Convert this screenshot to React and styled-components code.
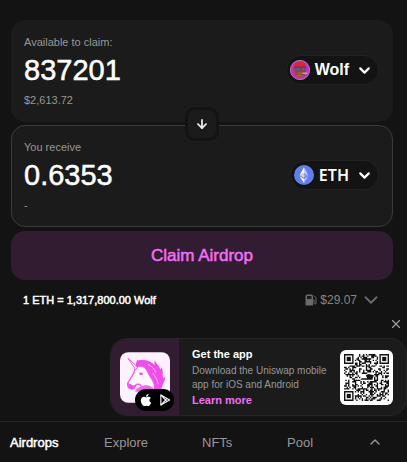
import React from 'react'
import styled, { createGlobalStyle, css } from 'styled-components'
import { FaApple } from 'react-icons/fa'
import { FiArrowDown, FiChevronDown, FiChevronUp, FiX } from 'react-icons/fi'

const GlobalStyle = createGlobalStyle`
    :root {
        --page: #131313;
        --card: #1b1b1b;
        --line: #252525;
        --plum: #311c31;
        --pink: #f36ef4;
        --white: #ffffff;
        --gray: #979797;
    }

    * {
        box-sizing: border-box;
    }

    body {
        margin: 0;
        background: var(--page);
        color: var(--white);
        font-family: 'Liberation Sans', Arial, sans-serif;
    }

    button {
        padding: 0;
        border: none;
        background: none;
        color: inherit;
        font-family: inherit;
        cursor: pointer;
    }

    a {
        text-decoration: none;
    }

    svg {
        display: block;
        flex-shrink: 0;
    }
`

// Liberation Sans has no medium weight, a thin stroke stands in for it
const medium = css`
    -webkit-text-stroke: 0.5px currentColor;
`

const Page = styled.div`
    min-height: 100vh;
    display: flex;
    flex-direction: column;
`

const Swap = styled.main`
    display: flex;
    flex-direction: column;
    padding: 20px 14px 0 11px;
`

const Cards = styled.div`
    position: relative;
    display: flex;
    flex-direction: column;
    gap: 3px;
`

const Card = styled.section`
    padding: 14px 13px 14px 12px;
    border: 1px solid ${({ $outlined }) => ($outlined ? '#393b3d' : 'var(--card)')};
    border-radius: 14px;
    background: var(--card);
`

const Small = styled.div`
    font-size: 11px;
    line-height: 14px;
    color: var(--gray);
`

const AmountRow = styled.div`
    display: flex;
    align-items: center;
    justify-content: space-between;
    height: 34px;
    margin: 4px 0 6px;
`

const Amount = styled.div`
    font-size: 29px;
    line-height: 34px;
    ${medium}
`

const TokenButton = styled.button`
    display: flex;
    align-items: center;
    height: 30px;
    padding: 0 5px 0 3px;
    border: 1px solid #222222;
    border-radius: 15px;
    background: #131313;
    font-family: ${({ $font }) => $font};
    font-size: 16px;
    font-weight: ${({ $weight }) => $weight};

    span {
        margin: 0 7px 0 5px;
    }
`

const SwitchButton = styled.button`
    position: absolute;
    top: 50%;
    left: 50%;
    transform: translate(-50%, -50%);
    width: 34px;
    height: 34px;
    display: flex;
    align-items: center;
    justify-content: center;
    border: 3px solid #131313;
    border-radius: 10px;
    background: var(--card);
    color: #eeeeee;
`

const ClaimButton = styled.button`
    height: 49px;
    margin-top: 4px;
    border-radius: 14px;
    background: var(--plum);
    color: var(--pink);
    font-size: 17px;
    ${medium}
`

const RateRow = styled.div`
    display: flex;
    align-items: center;
    justify-content: space-between;
    padding: 13px 11px 0 12px;
    line-height: 14px;
`

const Rate = styled.div`
    font-size: 11px;
    ${medium}
`

const GasButton = styled.button`
    display: flex;
    align-items: center;
    gap: 3px;
    height: 14px;
    color: #858585;
    font-size: 12px;
    line-height: 14px;

    svg {
        color: #6b6b6b;
    }
`

const Promo = styled.aside`
    display: flex;
    flex-direction: column;
    align-items: flex-end;
    gap: 7px;
    margin: 10px 0 5px;
`

const IconButton = styled.button`
    display: flex;
    margin-right: 4px;
    color: #9b9b9b;
`

const Banner = styled.div`
    width: 100%;
    max-width: 297px;
    height: 78px;
    display: flex;
    align-items: center;
    overflow: hidden;
    border: 1px solid var(--line);
    border-radius: 17px;
    background: var(--card);
`

const AppTile = styled.div`
    position: relative;
    width: 68px;
    height: 100%;
    display: flex;
    align-items: center;
    padding-left: 9px;
    background: var(--plum);
`

const Stores = styled.div`
    position: absolute;
    right: 5px;
    bottom: 4px;
    width: 39px;
    height: 22px;
    display: flex;
    align-items: center;
    justify-content: center;
    gap: 6px;
    border-radius: 11px;
    background: #000000;
`

const BannerText = styled.div`
    flex: 1;
    padding-left: 13px;

    h2 {
        margin: 0 0 3px;
        font-size: 11px;
        line-height: 14px;
    }

    p {
        margin: 0;
        color: var(--gray);
        font-size: 10px;
        line-height: 14px;
    }

    a {
        display: block;
        color: var(--pink);
        font-size: 11px;
        font-weight: 700;
        line-height: 16px;
    }
`

const QrBox = styled.div`
    margin-right: 13px;
    padding: 4px;
    border-radius: 6px;
    background: #ffffff;
`

const Nav = styled.nav`
    display: grid;
    grid-template-columns: 94fr 98fr 85fr 80fr auto;
    align-items: center;
    height: 41px;
    margin-top: auto;
    padding: 0 20px 0 10px;
    border-top: 1px solid var(--line);
`

const NavLink = styled.a`
    color: var(--gray);
    font-size: 13px;

    ${({ $active }) =>
        $active &&
        css`
            color: var(--white);
            ${medium}
        `}
`

const WolfIcon = () => (
    <svg width="20" height="20" viewBox="0 0 60 60">
        <circle cx="30" cy="30" r="29" fill="#c32fc0" stroke="#d9a0c8" strokeWidth="2" />
        <path d="M13 21h35v19h-4v8h-7v4H22v-4h-6v-9h-3z" fill="#8d4b2d" />
        <path d="M15 10h6V5h19v4h6v13H13V14z" fill="#d8293b" />
        <path d="M13 19h35v4H13z" fill="#97283a" />
        <path d="M18 24h10v8H18zM33 24h11v8H33z" fill="#4b4f9b" />
        <path d="M21 26h4v3h-4zM37 26h4v3h-4z" fill="#6f8bd6" />
        <path d="M22 38h16v3H22z" fill="#d3527c" />
        <path d="M38 38h14v3H38z" fill="#e4cfd0" />
        <path d="M20 45h18v4H20z" fill="#b36a2e" />
    </svg>
)

const EthIcon = () => (
    <svg width="20" height="20" viewBox="0 0 60 60">
        <circle cx="30" cy="30" r="30" fill="#627eea" />
        <path d="M30 7v17l13 7z" fill="#c5d0f8" />
        <path d="M30 7L17 31l13-7z" fill="#ffffff" />
        <path d="M30 24v15l13-8z" fill="#8fa2ef" />
        <path d="M17 31l13 8V24z" fill="#c9d3f9" />
        <path d="M30 42v12l13-20z" fill="#b5c2f5" />
        <path d="M17 34l13 20V42z" fill="#ffffff" />
    </svg>
)

const GasIcon = () => (
    <svg width="12" height="12" viewBox="0 0 24 24" fill="none">
        <path d="M4 1h9a3 3 0 013 3v19H1V4a3 3 0 013-3z" fill="#6b6b6b" />
        <path d="M4 4h9v6H4z" fill="#1b1b1b" />
        <path d="M16 12h2v6a2 2 0 004 0V8l-4-5" stroke="#6b6b6b" strokeWidth="2" />
    </svg>
)

const PlayIcon = () => (
    <svg width="12" height="12" viewBox="0 0 24 26" fill="none" stroke="#ffffff" strokeWidth="2.4" strokeLinejoin="round">
        <path d="M3 2l19 11L3 24z" />
        <path d="M3 2l13 14M3 24l13-14" />
    </svg>
)

const UnicornIcon = () => (
    <svg width="50" height="51" viewBox="0 0 150 152">
        <rect width="150" height="152" rx="25" fill="#fdf1fd" />
        {/* mane */}
        <path
            d="M54 25c24-4 40 3 50 14-1-5-1-10 1-14 3 10 13 15 16 27 3-3 3-6 2-10 8 14 4 23 6 33 2 3 5 1 6-2 1 17-8 22-9 32-3 8-10 13-18 17-4 3-9 0-9-6 1-9-4-16-12-23-8-8-10-18-16-29-5-9-9-13-19-17z"
            fill="#f04eea"
        />
        {/* head and neck */}
        <path
            d="M53 43c15-4 25 3 31 17 5 13 13 20 17 31 4 10 4 17 0 23-9-13-23-15-36-10-3-7-9-9-16-7-5 5-7 13-14 13-9 0-14-9-12-16 3-11 15-20 20-36 1-6 3-11 6-15z"
            fill="#fff5ff"
            stroke="#ef5de8"
            strokeWidth="4"
            strokeLinejoin="round"
        />
        <path d="M24 18l29 27-6 8z" fill="#fff5ff" stroke="#ef5de8" strokeWidth="3" strokeLinejoin="round" />
        <path d="M53 22l5 19-11 3c0-9 2-16 6-22z" fill="#f04eea" />
        <path d="M84 37c12 5 19 13 23 24M98 63c8 9 14 19 16 33" fill="none" stroke="#fff5ff" strokeWidth="2" />
        <path d="M57 63c5-4 11-2 13 3-5 4-11 3-13-3z" fill="#f04eea" />
        <path d="M25 93c5 3 10 2 14 7 4 0 6-2 8-4 1 9-4 17-11 16-9-1-13-10-11-19z" fill="#f04eea" />
        <path d="M50 110c11-9 26-11 41-5 7 3 12 8 14 14H45z" fill="#f268ee" />
    </svg>
)

const QR_SIZE = 33

const inFinder = (x, y) => {
    const far = QR_SIZE - 8
    return (x < 8 && y < 8) || (x >= far && y < 8) || (x < 8 && y >= far)
}

const qrModules = () => {
    let seed = 29
    let d = ''
    for (let y = 0; y < QR_SIZE; y++) {
        for (let x = 0; x < QR_SIZE; x++) {
            seed = (seed * 1103515245 + 12345) % 2147483648
            const inLogo = x > 11 && x < 22 && y > 13 && y < 19
            if (!inFinder(x, y) && !inLogo && seed / 2147483648 < 0.5) {
                d += `M${x} ${y}h1v1h-1z`
            }
        }
    }
    return d
}

const Finder = ({ x, y }) => (
    <g fill="#111111">
        <path fillRule="evenodd" d={`M${x} ${y}h7v7h-7zM${x + 1} ${y + 1}v5h5v-5z`} />
        <rect x={x + 2} y={y + 2} width="3" height="3" />
    </g>
)

const QrCode = () => (
    <svg width="45" height="47" viewBox={`0 0 ${QR_SIZE} ${QR_SIZE}`} preserveAspectRatio="none" role="img">
        <path d={qrModules()} fill="#111111" />
        <Finder x={0} y={0} />
        <Finder x={QR_SIZE - 7} y={0} />
        <Finder x={0} y={QR_SIZE - 7} />
        <path d="M12 18l1-1h4l-1-2 2-1 4 1-1 2v1h-7z" fill="#111111" />
    </svg>
)

const TokenCard = ({ label, amount, value, outlined, children }) => (
    <Card $outlined={outlined}>
        <Small>{label}</Small>
        <AmountRow>
            <Amount>{amount}</Amount>
            {children}
        </AmountRow>
        <Small>{value}</Small>
    </Card>
)

const links = ['Airdrops', 'Explore', 'NFTs', 'Pool']

const App = () => {
    return (
        <Page>
            <GlobalStyle />
            <Swap>
                <Cards>
                    <TokenCard label="Available to claim:" amount="837201" value="$2,613.72">
                        <TokenButton $font="'Liberation Sans', Arial, sans-serif" $weight={700}>
                            <WolfIcon />
                            <span>Wolf</span>
                            <FiChevronDown size={17} strokeWidth={3} />
                        </TokenButton>
                    </TokenCard>
                    <TokenCard label="You receive" amount="0.6353" value="-" outlined>
                        <TokenButton $font="'Noto Sans', sans-serif" $weight={600}>
                            <EthIcon />
                            <span>ETH</span>
                            <FiChevronDown size={17} strokeWidth={3} />
                        </TokenButton>
                    </TokenCard>
                    <SwitchButton aria-label="Switch tokens">
                        <FiArrowDown size={14} strokeWidth={3} />
                    </SwitchButton>
                </Cards>
                <ClaimButton>Claim Airdrop</ClaimButton>
                <RateRow>
                    <Rate>1 ETH = 1,317,800.00 Wolf</Rate>
                    <GasButton>
                        <GasIcon />
                        $29.07
                        <FiChevronDown size={22} strokeWidth={2} />
                    </GasButton>
                </RateRow>
            </Swap>

            <Promo>
                <IconButton aria-label="Close">
                    <FiX size={14} />
                </IconButton>
                <Banner>
                    <AppTile>
                        <UnicornIcon />
                        <Stores>
                            <FaApple size={14} />
                            <PlayIcon />
                        </Stores>
                    </AppTile>
                    <BannerText>
                        <h2>Get the app</h2>
                        <p>
                            Download the Uniswap mobile
                            <br />
                            app for iOS and Android
                        </p>
                        <a href="#app">Learn more</a>
                    </BannerText>
                    <QrBox>
                        <QrCode />
                    </QrBox>
                </Banner>
            </Promo>

            <Nav>
                {links.map((name, i) => (
                    <NavLink key={name} href={`#${name.toLowerCase()}`} $active={i === 0}>
                        {name}
                    </NavLink>
                ))}
                <IconButton aria-label="More">
                    <FiChevronUp size={16} />
                </IconButton>
            </Nav>
        </Page>
    )
}

export default App
